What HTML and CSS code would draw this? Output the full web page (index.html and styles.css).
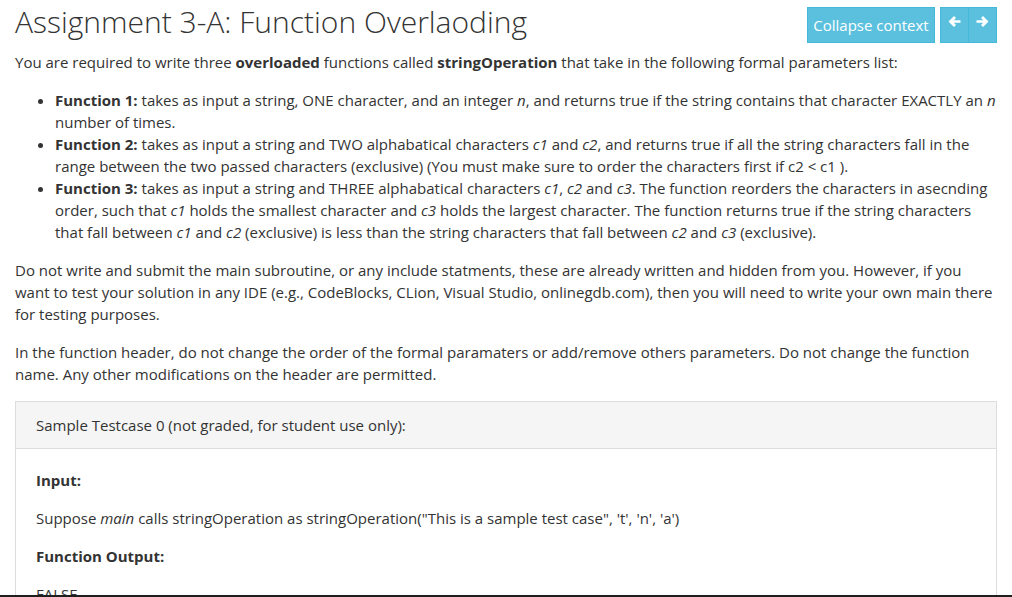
FILE: index.html
```html
<!DOCTYPE html>
<html>
<head>
<meta charset="utf-8">
<link rel="stylesheet" href="styles.css">
</head>
<body>
<div class="page">
  <div class="head">
    <h1 class="title">Assignment 3-A: Function Overlaoding</h1>
    <div class="tools">
      <button class="btn btn-text">Collapse context</button>
      <div class="btn-group">
        <button class="btn btn-icon"><svg width="13" height="13" viewBox="0 0 13 13"><path d="M0.5 6.5 L6 1 L8 3 L5.8 5.2 H12.5 V7.8 H5.8 L8 10 L6 12 Z" fill="#fff"/></svg></button>
        <button class="btn btn-icon"><svg width="13" height="13" viewBox="0 0 13 13"><path d="M12.5 6.5 L7 1 L5 3 L7.2 5.2 H0.5 V7.8 H7.2 L5 10 L7 12 Z" fill="#fff"/></svg></button>
      </div>
    </div>
  </div>
  <p class="intro">You are required to write three <b>overloaded</b> functions called <b>stringOperation</b> that take in the following formal parameters list:</p>
  <ul class="list">
    <li><b>Function 1:</b> takes as input a string, ONE character, and an integer <i>n</i>, and returns true if the string contains that character EXACTLY an <i>n</i> number of times.</li>
    <li><b>Function 2:</b> takes as input a string and TWO alphabatical characters <i>c1</i> and <i>c2</i>, and returns true if all the string characters fall in the range between the two passed characters (exclusive) (You must make sure to order the characters first if c2 &lt; c1 ).</li>
    <li><b>Function 3:</b> takes as input a string and THREE alphabatical characters <i>c1</i>, <i>c2</i> and <i>c3</i>. The function reorders the characters in asecnding order, such that <i>c1</i> holds the smallest character and <i>c3</i> holds the largest character. The function returns true if the string characters that fall between <i>c1</i> and <i>c2</i> (exclusive) is less than the string characters that fall between <i>c2</i> and <i>c3</i> (exclusive).</li>
  </ul>
  <p>Do not write and submit the main subroutine, or any include statments, these are already written and hidden from you. However, if you want to test your solution in any IDE (e.g., CodeBlocks, CLion, Visual Studio, onlinegdb.com), then you will need to write your own main there for testing purposes.</p>
  <p>In the function header, do not change the order of the formal paramaters or add/remove others parameters. Do not change the function name. Any other modifications on the header are permitted.</p>
  <div class="panel">
    <div class="panel-heading">Sample Testcase 0 (not graded, for student use only):</div>
    <div class="panel-body">
      <p><b>Input:</b></p>
      <p>Suppose <i>main</i> calls stringOperation as stringOperation("This is a sample test case", 't', 'n', 'a')</p>
      <p><b>Function Output:</b></p>
      <p>FALSE</p>
    </div>
  </div>
</div>
<div class="bottom-bar"></div>
</body>
</html>
```
FILE: styles.css
```css
html, body {
  margin: 0;
  padding: 0;
  background: #fff;
  overflow: hidden;
}
body {
  font-family: "Open Sans", "Liberation Sans", sans-serif;
  font-size: 15px;
  line-height: 22px;
  color: #333;
}
.page {
  padding: 0 15px;
}
.head {
  display: flex;
  justify-content: space-between;
  align-items: flex-start;
}
.title {
  font-weight: 300;
  font-size: 30px;
  line-height: 44px;
  margin: 0;
  color: #333;
}
.tools {
  display: flex;
  gap: 5px;
  margin-top: 7px;
}
.btn {
  font-family: "Open Sans", "Liberation Sans", sans-serif;
  font-size: 15px;
  line-height: 22px;
  color: #fff;
  background: #5bc0de;
  border: 1px solid #46b8da;
  height: 36px;
  box-sizing: border-box;
  border-radius: 0;
  cursor: pointer;
}
.btn-text {
  width: 128px;
  padding: 6px 0;
  text-align: center;
}
.btn-group {
  display: flex;
}
.btn-icon {
  width: 29px;
  padding: 0;
  display: flex;
  align-items: center;
  justify-content: center;
}
.btn-icon + .btn-icon {
  margin-left: -1px;
}
.btn-icon svg {
  margin-top: -8px;
}
p {
  margin: 0 0 16px;
}
.intro {
  margin-top: 7px;
  margin-bottom: 16px;
}
.list {
  margin: 0 0 16px;
  padding-left: 40px;
}
.panel {
  border: 1px solid #ddd;
}
.panel-heading {
  background: #f5f5f5;
  border-bottom: 1px solid #ddd;
  padding: 12px 20px;
}
.panel-body {
  padding: 20px 20px;
}
.bottom-bar {
  position: fixed;
  left: 0;
  right: 0;
  bottom: 0;
  height: 2px;
  background: #1e1e1e;
}
```
